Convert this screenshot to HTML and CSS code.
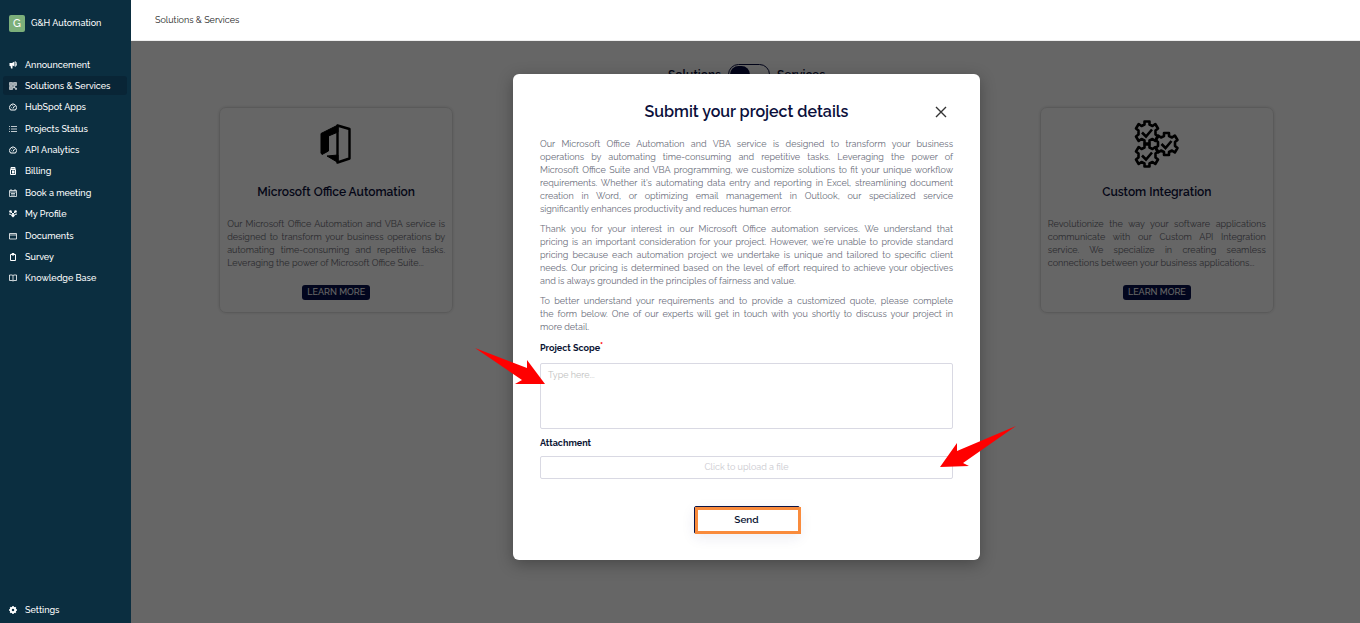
FILE: index.html
```html
<!DOCTYPE html>
<html lang="en">
<head>
<meta charset="utf-8">
<title>Solutions &amp; Services</title>
<link rel="stylesheet" href="styles.css">
</head>
<body>
<div class="app">
  <aside class="sidebar">
    <div class="brand"><span class="brand-mark">G</span><span>G&amp;H Automation</span></div>
    <nav class="nav nav-main">
      <a href="#"><svg class="ico" viewBox="0 0 16 16"><path d="M1 4h5l5-3v10L7 9v6H4l-1-5H1z" fill="currentColor"/><path d="M12 2h2v8h-2M14 5v3" fill="none" stroke="currentColor" stroke-width="2"/></svg>Announcement</a>
      <a href="#" class="active"><svg class="ico" viewBox="0 0 16 16"><path d="M1 1h6v6H1zM9 1h6v6H9zM1 9h6v6H1zM9 9h3v3H9zM13 12h2v3h-2z" fill="currentColor" fill-opacity=".6" stroke="currentColor"/></svg>Solutions &amp; Services</a>
      <a href="#"><svg class="ico" viewBox="0 0 16 16"><path d="M3 14a7 7 0 1 1 10 0zM8 11l3-5M4 9h1M6 5h1" fill="none" stroke="currentColor" stroke-width="2"/></svg>HubSpot Apps</a>
      <a href="#"><svg class="ico" viewBox="0 0 16 16"><path d="M0 3h2M4 3h12M0 8h2M4 8h12M0 13h2M4 13h12" fill="none" stroke="currentColor" stroke-width="1.500"/></svg>Projects Status</a>
      <a href="#"><svg class="ico" viewBox="0 0 16 16"><path d="M3 14a7 7 0 1 1 10 0zM8 11l3-5M4 9h1M6 5h1" fill="none" stroke="currentColor" stroke-width="2"/></svg>API Analytics</a>
      <a href="#"><svg class="ico" viewBox="0 0 16 16"><path d="M4 1h8v3H4zM3 5h10v10H3z" fill="none" stroke="currentColor" stroke-width="2"/><path d="M6 7h5v6H6z" fill="currentColor"/></svg>Billing</a>
      <a href="#"><svg class="ico" viewBox="0 0 16 16"><path d="M1 3h14v12H1zM1 6h14M4 0v3M12 0v3M4 9h8M4 12h8" fill="none" stroke="currentColor" stroke-width="1.500"/></svg>Book a meeting</a>
      <a href="#"><svg class="ico" viewBox="0 0 16 16"><circle cx="3" cy="3" r="2.600" fill="currentColor"/><circle cx="13" cy="3" r="2.600" fill="currentColor"/><path d="M3 3l5 5 5-5M0 8l5 1M16 8l-5 1" stroke="currentColor" stroke-width="2" fill="none"/><path d="M8 7l4 4-4 4-4-4z" fill="currentColor"/></svg>My Profile</a>
      <a href="#"><svg class="ico" viewBox="0 0 16 16"><path d="M1 3h14v11H1zM1 6h14" fill="none" stroke="currentColor" stroke-width="1.600"/></svg>Documents</a>
      <a href="#"><svg class="ico" viewBox="0 0 16 16"><path d="M3 3h10v12H3zM6 1h4v3H6z" fill="none" stroke="currentColor" stroke-width="2"/></svg>Survey</a>
      <a href="#"><svg class="ico" viewBox="0 0 16 16"><path d="M1 2h5l2 1 2-1h5v11h-5l-2 1-2-1H1zM8 3v11" fill="none" stroke="currentColor" stroke-width="1.600"/></svg>Knowledge Base</a>
    </nav>
    <nav class="nav nav-bottom">
      <a href="#"><svg class="ico" viewBox="0 0 16 16"><circle cx="8" cy="8" r="4.500" fill="none" stroke="currentColor" stroke-width="4"/><path d="M8 0v2M8 14v2M0 8h2M14 8h2M2.500 2.500l1 1M12.500 12.500l1 1M2.500 13.500l1-1M12.500 3.500l1-1" stroke="currentColor" stroke-width="3"/></svg>Settings</a>
    </nav>
  </aside>

  <div class="content">
    <header class="topbar">Solutions &amp; Services</header>
    <main class="stage">
      <div class="toggle-row">
        <span class="toggle-name">Solutions</span>
        <button class="switch" type="button" role="switch" aria-checked="false" aria-label="Show services"><span class="knob"></span></button>
        <span class="toggle-name">Services</span>
      </div>
      <div class="cards">
        <article class="card">
          <svg class="card-ico" viewBox="0 0 48 48"><path d="M25.500 5.500L37.500 9v29.500l-12 4z" fill="none" stroke="#000" stroke-width="2.400" stroke-linejoin="round"/><path d="M26 5v7l-9.500 4v15L10 34.500 9 33V13.500zM15 36l11-1v7.500z" fill="#000" stroke="#000" stroke-linejoin="round"/></svg>
          <h2>Microsoft Office Automation</h2>
          <p><span class="line">Our Microsoft Office Automation and VBA service is</span> <span class="line">designed to transform your business operations by</span> <span class="line">automating time-consuming and repetitive tasks.</span> <span class="line end">Leveraging the power of Microsoft Office Suite...</span></p>
          <button class="more" type="button">LEARN MORE</button>
        </article>
        <article class="card last">
          <svg class="card-ico" viewBox="0 0 48 48">
            <defs><g id="gear"><path d="M-2.500-11h5v3l3 1.500 2.800-2 2.700 4.500-2.500 2v4l2.500 2-2.700 4.500-2.800-2-3 1.500v3h-5v-3l-3-1.500-2.800 2-2.700-4.500 2.500-2v-4l-2.500-2 2.700-4.500 2.800 2 3-1.500z" fill="none" stroke="#000" stroke-width="2.600" stroke-linejoin="round"/><path d="M-5 0l4 4 6-7" fill="none" stroke="#000" stroke-width="2.600"/></g></defs>
            <use href="#gear" x="14" y="12.500"/><use href="#gear" x="14" y="35.500"/><use href="#gear" x="33.500" y="24"/>
          </svg>
          <h2>Custom Integration</h2>
          <p><span class="line">Revolutionize the way your software applications</span> <span class="line">communicate with our Custom API Integration</span> <span class="line">service. We specialize in creating seamless</span> <span class="line end">connections between your business applications...</span></p>
          <button class="more" type="button">LEARN MORE</button>
        </article>
      </div>

      <div class="overlay">
        <form class="modal" role="dialog" aria-labelledby="modal-title">
          <div class="modal-head">
            <h1 id="modal-title">Submit your project details</h1>
            <button class="close" type="button" aria-label="Close"><svg viewBox="0 0 12 12"><path d="M1 1l10 10M11 1L1 11" stroke="#333" stroke-width="1.400" fill="none"/></svg></button>
          </div>
          <p><span class="line">Our Microsoft Office Automation and VBA service is designed to transform your business</span> <span class="line">operations by automating time-consuming and repetitive tasks. Leveraging the power of</span> <span class="line">Microsoft Office Suite and VBA programming, we customize solutions to fit your unique workflow</span> <span class="line">requirements. Whether it's automating data entry and reporting in Excel, streamlining document</span> <span class="line">creation in Word, or optimizing email management in Outlook, our specialized service</span> <span class="line end">significantly enhances productivity and reduces human error.</span></p>
          <p><span class="line">Thank you for your interest in our Microsoft Office automation services. We understand that</span> <span class="line">pricing is an important consideration for your project. However, we're unable to provide standard</span> <span class="line">pricing because each automation project we undertake is unique and tailored to specific client</span> <span class="line">needs. Our pricing is determined based on the level of effort required to achieve your objectives</span> <span class="line end">and is always grounded in the principles of fairness and value.</span></p>
          <p><span class="line">To better understand your requirements and to provide a customized quote, please complete</span> <span class="line">the form below. One of our experts will get in touch with you shortly to discuss your project in</span> <span class="line end">more detail.</span></p>
          <label class="field-name" for="scope">Project Scope<span class="req">*</span></label>
          <div class="field">
            <textarea id="scope" placeholder="Type here..."></textarea>
            <svg class="arrow arrow-scope" viewBox="0 0 70 38"><path d="M0 0L52 20V12L70 36H40L47 32z" fill="#f00"/></svg>
          </div>
          <label class="field-name" for="upload">Attachment</label>
          <div class="field">
            <button class="upload" id="upload" type="button">Click to upload a file</button>
            <svg class="arrow arrow-upload" viewBox="0 0 76 42"><path d="M76 0L17 25V17L0 41L29 40L23 37z" fill="#f00"/></svg>
          </div>
          <div class="actions">
            <button class="send" type="button">Send</button>
            <span class="highlight"></span>
          </div>
        </form>
      </div>
    </main>
  </div>
</div>
</body>
</html>
```
FILE: styles.css
```css
* { box-sizing: border-box; }
body { margin: 0; font-family: Raleway, Lato, "Open Sans", sans-serif; font-size: 9px; }
button, textarea { font: inherit; }
h1, h2, p { margin: 0; }
.app { display: flex; min-height: 100vh; }

.sidebar { flex: 0 0 131px; display: flex; flex-direction: column; padding: 14px 4px 4px 3px; background: #0b2e40; color: #fff; }
.brand { display: flex; align-items: center; gap: 6px; height: 18px; padding-left: 6px; margin-bottom: 23px; font-weight: 500; }
.brand-mark { width: 16px; height: 17px; border-radius: 2px; background: #7caf7a; font-size: 11px; line-height: 17px; text-align: center; }
.nav { display: flex; flex-direction: column; justify-content: space-between; }
.nav-main { height: 233px; }
.nav a { display: flex; align-items: center; gap: 8px; height: 19px; padding-left: 6px; border-radius: 3px; color: #fff; font-weight: 500; text-decoration: none; }
.nav a.active { background: #092536; }
.nav-bottom { margin-top: auto; }
.ico { width: 8px; height: 8px; }

.content { flex: 1; display: flex; flex-direction: column; min-width: 0; }
.topbar { height: 41px; padding-left: 24px; border-bottom: 1px solid #eee; background: #fff; color: #222; line-height: 40px; }
.stage { position: relative; flex: 1; padding: 23px 0 0 2px; background: #fff; }
.toggle-row { display: flex; justify-content: center; align-items: center; gap: 7px; height: 21px; }
.toggle-name { color: #0b0f3b; font-size: 12px; line-height: 18px; font-weight: 600; }
.switch { width: 42px; height: 21px; padding: 1px; border: 1px solid #060b40; border-radius: 11px; background: #fff; }
.knob { display: block; width: 20px; height: 17px; border-radius: 9px; background: #060b40; }
.cards { display: grid; grid-template-columns: repeat(3, 1fr); column-gap: 4px; justify-items: center; margin-top: 22px; }
.card { display: flex; flex-direction: column; align-items: center; width: 234px; height: 206px; padding: 12px 7px; border: 1px solid #e2e2e2; border-radius: 7px; box-shadow: 0 0 3px #ddd; }
.card.last { grid-column: 3; }
.card-ico { width: 48px; height: 48px; }
.card h2 { margin: 15px 0 17px; color: #0b0f3b; font-size: 12px; line-height: 18px; font-weight: 600; }
.card p { align-self: stretch; color: #6b6b75; line-height: 13px; }
.line { display: block; text-align: justify; text-align-last: justify; white-space: nowrap; }
.line.end { text-align-last: left; }
.more { height: 15px; margin-top: 15px; padding: 0 5px; border: 0; border-radius: 3px; background: #060f4b; color: #fff; font-weight: 500; line-height: 15px; }

.overlay { position: absolute; inset: 0; display: flex; justify-content: center; align-items: flex-start; padding: 33px 0 0 2px; background: rgba(0, 0, 0, .6); }
.modal { width: 467px; height: max-content; padding: 26px 27px; border-radius: 6px; background: #fff; box-shadow: 0 4px 16px rgba(0, 0, 0, .3); }
.modal-head { display: grid; grid-template-columns: 24px 1fr 24px; align-items: center; height: 22px; margin-bottom: 16px; }
.modal h1 { grid-column: 2; color: #0b0f3b; font-size: 16px; line-height: 22px; font-weight: 600; text-align: center; }
.close { display: flex; width: 24px; height: 24px; padding: 6px; border: 0; background: none; }
.close svg { width: 12px; height: 12px; }
.modal p { margin-bottom: 7px; color: #6a6d7a; line-height: 13px; }
.field-name { display: block; height: 14px; color: #0b1433; line-height: 14px; font-weight: 700; }
.req { color: #f00; vertical-align: 2px; line-height: 8px; }
.field { position: relative; }
.field textarea { display: block; width: 100%; height: 66px; margin: 8px 0 7px; padding: 6px 7px; border: 1px solid #d9d9e3; border-radius: 2px; resize: none; }
.field textarea::placeholder { color: #bfbfbf; }
.upload { display: block; width: 100%; height: 23px; margin-top: 6px; padding: 0 0 2px; border: 1px solid #d9d9e3; border-radius: 2px; background: #fff; color: #c9c9cf; }
.arrow { position: absolute; }
.arrow-scope { left: -65px; top: -15px; width: 70px; height: 38px; }
.arrow-upload { right: -63px; top: -30px; width: 76px; height: 42px; }
.actions { position: relative; width: 106px; margin: 27px auto 0; }
.send { display: block; width: 106px; height: 28px; padding: 0 0 2px; border: 1px solid #0b1445; border-radius: 2px; background: #fff; color: #0b1433; font-size: 10px; font-weight: 600; box-shadow: 0 4px 14px rgba(40, 40, 120, .08); }
.highlight { position: absolute; inset: 1px -1px 0 1px; border: 3px solid #f98b3c; pointer-events: none; }
```
